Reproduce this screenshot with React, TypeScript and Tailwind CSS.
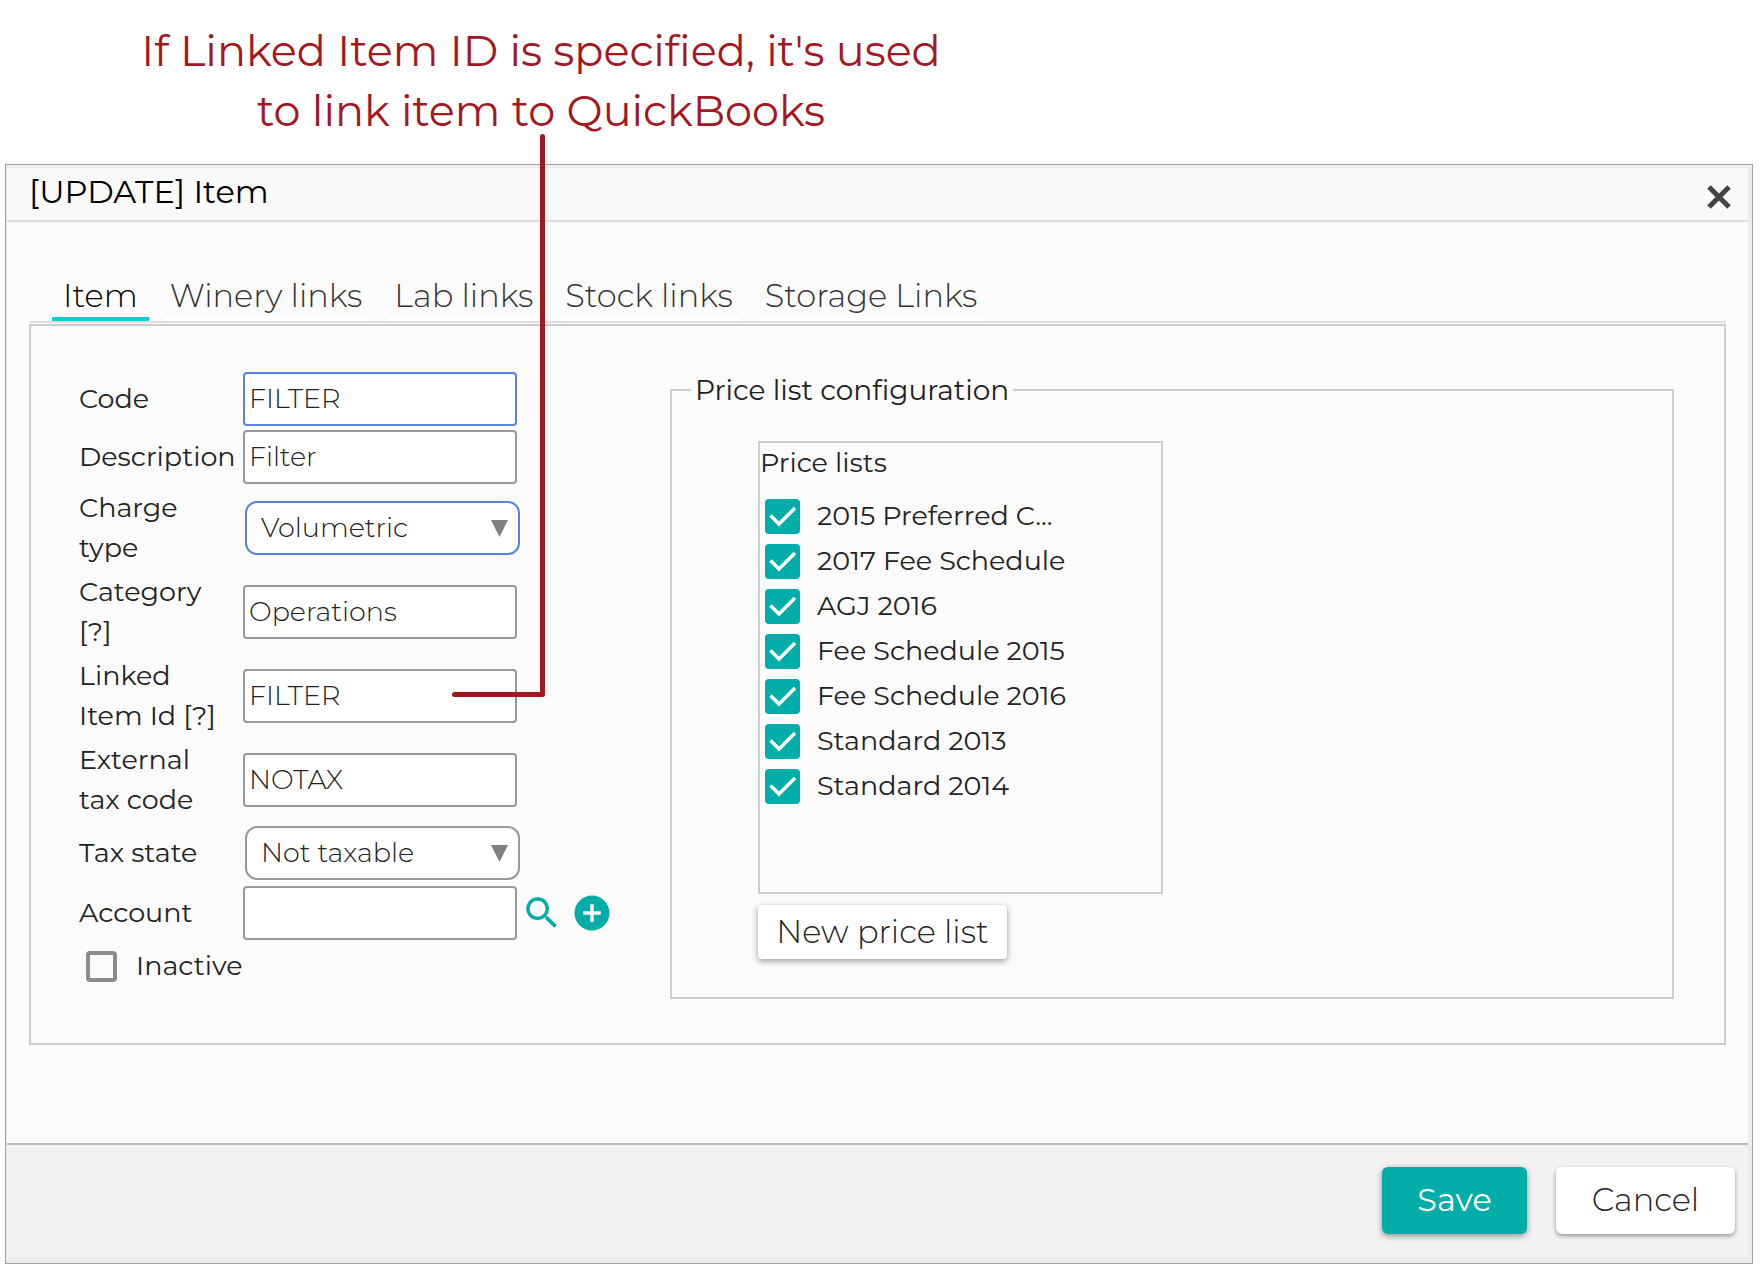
import { useState, type ReactNode } from 'react';
import { MdAddCircle, MdSearch } from 'react-icons/md';

interface FieldProps {
  id: string;
  label: string;
  height?: 'single' | 'medium' | 'double';
  children: ReactNode;
}

const rowHeights = {
  single: 'h-[58px]',
  medium: 'h-[62px]',
  double: 'h-[84px]',
};

const tabs = ['Item', 'Winery links', 'Lab links', 'Stock links', 'Storage Links'];

const priceLists = [
  '2015 Preferred C...',
  '2017 Fee Schedule',
  'AGJ 2016',
  'Fee Schedule 2015',
  'Fee Schedule 2016',
  'Standard 2013',
  'Standard 2014',
];

function Field({ id, label, height = 'single', children }: FieldProps) {
  return (
    <div className={`flex items-center ${rowHeights[height]}`}>
      <label htmlFor={id} className="w-[164px] shrink-0 whitespace-pre font-[450] leading-10">
        {label}
      </label>
      {children}
    </div>
  );
}

function TextInput({ id, value, active = false }: { id: string; value: string; active?: boolean }) {
  return (
    <input
      id={id}
      type="text"
      defaultValue={value}
      className={`h-[54px] w-[274px] rounded-[4px] border-2 bg-white px-1 pb-[2px] font-light outline-none ${active ? 'border-[#5585e0]' : 'border-[#999]'}`}
    />
  );
}

function SelectInput({ id, options, active = false }: { id: string; options: string[]; active?: boolean }) {
  return (
    <div className="relative ml-[2px]">
      <select
        id={id}
        className={`h-[54px] w-[275px] appearance-none rounded-xl border-2 bg-white pl-[14px] font-light outline-none ${active ? 'border-[#5585e0]' : 'border-[#999]'}`}
      >
        {options.map(option => (
          <option key={option}>{option}</option>
        ))}
      </select>
      <svg viewBox="0 0 17 17" className="pointer-events-none absolute right-3 top-[19px] size-[17px] fill-[#808080]">
        <path d="M0 0h17L8.5 17z" />
      </svg>
    </div>
  );
}

function PriceListRow({ name }: { name: string }) {
  return (
    <li>
      <label className="flex h-[45px] items-center gap-[17px] font-[450]">
        <span className="relative size-[35px]">
          <input type="checkbox" defaultChecked className="peer block size-[35px] appearance-none rounded-[4px] border-4 border-[#8c8c8c] checked:border-[#00ada9] checked:bg-[#00ada9]" />
          <svg viewBox="0 0 35 35" className="pointer-events-none absolute inset-0 hidden size-[35px] fill-none stroke-white stroke-[3.5] peer-checked:block">
            <path d="M5.500 16.500l8.500 8.500L30 9" />
          </svg>
        </span>
        {name}
      </label>
    </li>
  );
}

export default function App() {
  const [activeTab, setActiveTab] = useState('Item');

  return (
    <main className="relative bg-white pb-[7px] pt-[21px] font-['Montserrat','Inter',sans-serif] text-[27px] text-[#222]">
      <p className="ml-[141px] w-[800px] whitespace-nowrap text-center text-[43px] leading-[60px] text-[#a3181f]">
        If Linked Item ID is specified, it's used
        <br />
        to link item to QuickBooks
      </p>

      <section role="dialog" aria-labelledby="dialog-title" className="ml-[5px] mr-[9px] mt-[23px] border border-[#9f9f9f] bg-[#ededed] pb-[6px] pl-px pr-[4px] pt-[3px]">
        <header className="flex h-[54px] items-center justify-between border-b-2 border-[#ddd] bg-[#f9f9f9] pl-[22px] pr-[17px]">
          <h1 id="dialog-title" className="pb-1 text-[32px] leading-10 text-black">[UPDATE] Item</h1>
          <button type="button" aria-label="Close" className="mt-[6px]">
            <svg viewBox="0 0 24 24" className="size-6 fill-none stroke-[#444] stroke-5">
              <path d="M2 2l20 20M22 2L2 22" />
            </svg>
          </button>
        </header>

        <div className="bg-[#fbfbfb] pb-[98px] pl-[22px] pr-[22px] pt-[54px]">
          <nav className="mb-px flex gap-[10px] border-b-2 border-[#ddd] pl-[23px]">
            {tabs.map(tab => (
              <button
                key={tab}
                type="button"
                onClick={() => setActiveTab(tab)}
                className={`h-[45px] border-b-4 px-[11px] pb-[2px] text-[32px] font-light leading-10 ${tab === activeTab ? 'border-[#00d1ce] text-black' : 'rounded-b-xl border-white text-[#333]'}`}
              >
                {tab}
              </button>
            ))}
          </nav>

          <div className="flex border-2 border-[#ccc] pb-[44px] pl-12 pr-[50px] pt-[44px]">
            <form className="w-[591px] shrink-0">
              <Field id="code" label="Code">
                <TextInput id="code" value="FILTER" active />
              </Field>
              <Field id="description" label="Description">
                <TextInput id="description" value="Filter" />
              </Field>
              <Field id="charge-type" label={'Charge\ntype'} height="double">
                <SelectInput id="charge-type" options={['Volumetric']} active />
              </Field>
              <Field id="category" label={'Category\n[?]'} height="double">
                <TextInput id="category" value="Operations" />
              </Field>
              <Field id="linked-item" label={'Linked\nItem Id [?]'} height="double">
                <TextInput id="linked-item" value="FILTER" />
              </Field>
              <Field id="tax-code" label={'External\ntax code'} height="double">
                <TextInput id="tax-code" value="NOTAX" />
              </Field>
              <Field id="tax-state" label="Tax state" height="medium">
                <SelectInput id="tax-state" options={['Not taxable']} />
              </Field>
              <Field id="account" label="Account">
                <TextInput id="account" value="" />
                <button type="button" aria-label="Search account" className="ml-1 text-[#00ada9]">
                  <MdSearch size={42} />
                </button>
                <button type="button" aria-label="Add account" className="ml-2 text-[#00ada9]">
                  <MdAddCircle size={42} />
                </button>
              </Field>
              <label className="flex h-12 items-center gap-[19px] pl-[7px] font-[450]">
                <input type="checkbox" className="size-[31px] appearance-none rounded-[4px] border-4 border-[#8c8c8c] checked:bg-[#00ada9]" />
                Inactive
              </label>
            </form>

            <fieldset className="min-w-0 flex-1 border-2 border-[#ccc] pb-[38px] pl-[19px]">
              <legend className="px-1 text-[28px] leading-10 [font-variant-ligatures:none]">Price list configuration</legend>
              <div className="ml-[67px] pt-[31px]">
                <div className="h-[453px] w-[405px] border-2 border-[#ccc]">
                  <h2 className="font-[450] leading-10">Price lists</h2>
                  <ul className="mt-[11px] pl-[5px]">
                    {priceLists.map(name => (
                      <PriceListRow key={name} name={name} />
                    ))}
                  </ul>
                </div>
                <button type="button" className="mt-[11px] h-[54px] w-[249px] rounded-[4px] bg-white text-[32px] font-light shadow-[0_2px_6px_rgba(0,0,0,0.4)]">
                  New price list
                </button>
              </div>
            </fieldset>
          </div>
        </div>

        <footer className="flex h-[114px] items-start justify-end gap-[29px] border-t-2 border-[#bbb] bg-[#f2f2f2] pr-[13px] pt-[22px] text-[32px]">
          <button type="button" className="h-[67px] w-[145px] rounded-md bg-[#00ada9] pb-[2px] text-white shadow-[0_2px_6px_rgba(0,0,0,0.4)]">
            Save
          </button>
          <button type="button" className="h-[67px] w-[179px] rounded-md bg-white pb-[2px] font-light shadow-[0_2px_4px_rgba(0,0,0,0.4)]">
            Cancel
          </button>
        </footer>
      </section>

      {/* callout line from the note to the Linked Item Id field */}
      <svg viewBox="0 0 93 563" className="pointer-events-none absolute left-[452px] top-[134px] h-[563px] w-[93px] fill-none stroke-[#a3181f] stroke-5 [stroke-linecap:round] [stroke-linejoin:round]">
        <path d="M90.500 2.500V560.500H2.500" />
      </svg>
    </main>
  );
}
